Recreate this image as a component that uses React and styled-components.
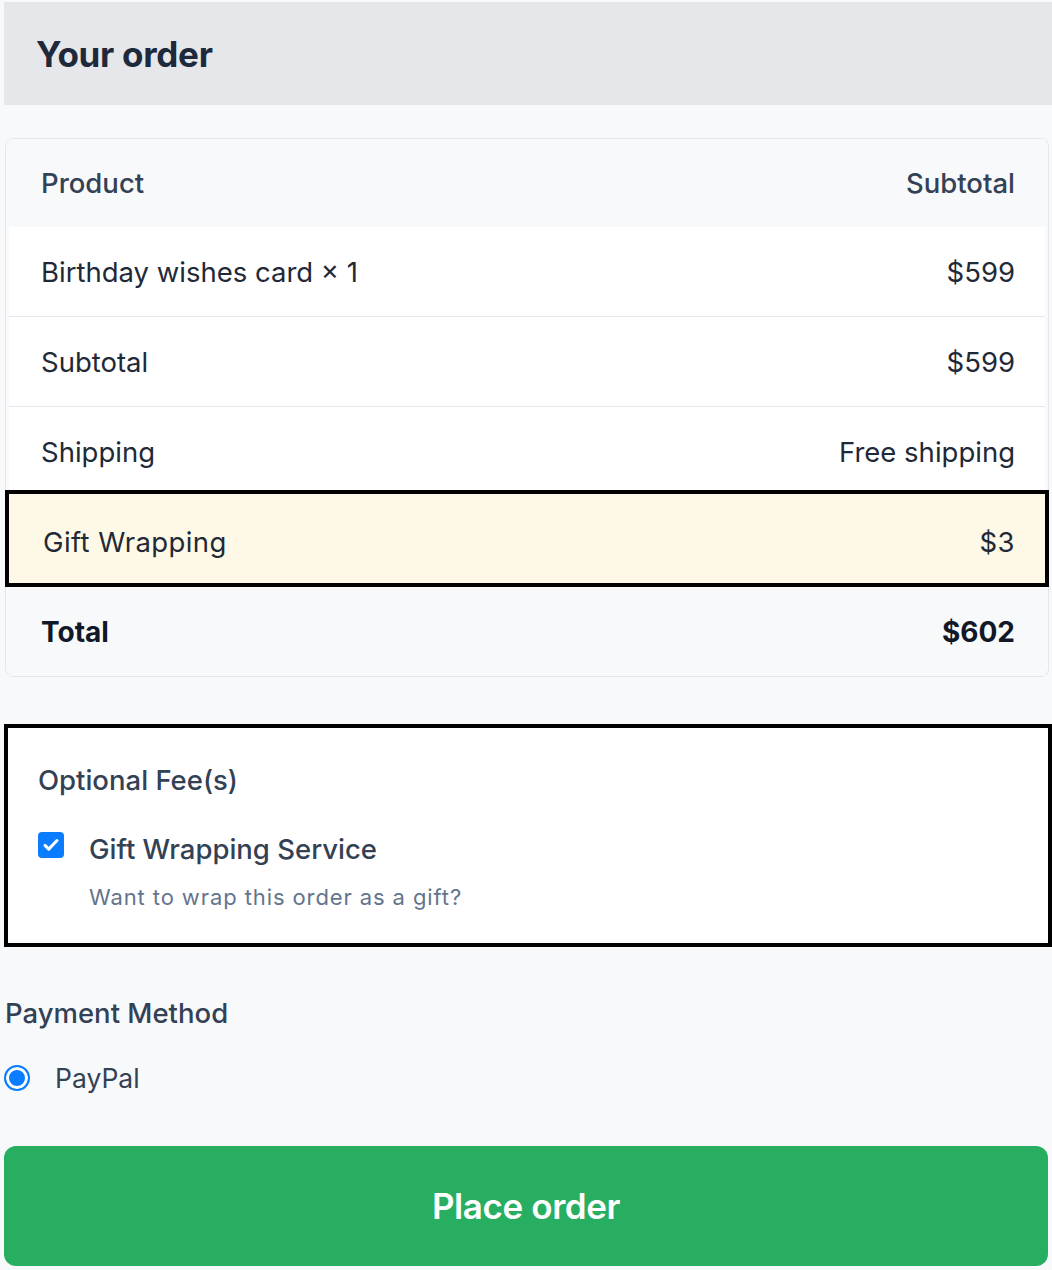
import React from 'react';
import styled, { createGlobalStyle } from 'styled-components';

const GlobalStyle = createGlobalStyle`
  html, body {
    margin: 0;
    padding: 0;
    background: #f8f9fb;
    font-family: Inter, "Noto Sans", "Liberation Sans", sans-serif;
    color: #1f2937;
  }
`;

const Page = styled.div`
  padding: 2px 2px 4px 4px;
  display: flex;
  flex-direction: column;
`;

const Header = styled.div`
  background: #e5e7eb;
  height: 103px;
  margin-right: -2px;
  display: flex;
  align-items: center;
  padding-left: 32px;
  h2 {
    margin: 0;
    font-size: 35px;
    font-weight: 700;
    color: #1e293b;
    letter-spacing: -0.3px;
  }
`;

const Card = styled.div`
  margin: 33px 1px 0 1px;
  border: 1px solid #e5e7eb;
  border-radius: 8px;
  padding: 0 3px;
  background: #f8f9fb;
`;

const Row = styled.div`
  display: flex;
  justify-content: space-between;
  align-items: center;
  box-sizing: border-box;
  height: ${p => p.$h || 90}px;
  padding: ${p => p.$pt || 0}px 30px 0 ${p => p.$pl || 32}px;
  font-size: ${p => (p.$bold ? 28 : 27.5)}px;
  color: ${p => (p.$bold ? '#111827' : '#1f2937')};
  font-weight: ${p => (p.$bold ? 700 : 400)};
  letter-spacing: ${p => (p.$wide ? 0.4 : 0)}px;
  background: ${p => p.$bg || '#ffffff'};
  border-bottom: ${p => (p.$line ? '1px solid #e5e7eb' : 'none')};
  outline: ${p => (p.$hl ? '4px solid #000' : 'none')};
  margin: ${p => (p.$hl ? '4px 0' : '0')};
`;

const HeadRow = styled(Row)`
  color: #334155;
  font-weight: 500;
`;

const FeeBox = styled.div`
  margin: 51px 0 0 4px;
  width: 1040px;
  height: 215px;
  box-sizing: border-box;
  outline: 4px solid #000;
  background: #fff;
  padding: 36px 30px 0;
`;

const FeeTitle = styled.div`
  font-size: 27.5px;
  font-weight: 500;
  color: #334155;
  line-height: 32px;
`;

const FeeOption = styled.label`
  display: grid;
  grid-template-columns: 26px 1fr;
  column-gap: 25px;
  margin-top: 39px;
`;

const Check = styled.span`
  width: 26px;
  height: 26px;
  border-radius: 4px;
  background: #0a7cff;
  display: flex;
  align-items: center;
  justify-content: center;
  margin-top: -3px;
`;

const OptionName = styled.div`
  font-size: 27.5px;
  font-weight: 500;
  color: #334155;
  line-height: 28px;
`;

const OptionDesc = styled.div`
  grid-column: 2;
  font-size: 22px;
  color: #64748b;
  margin-top: 21px;
  letter-spacing: 0.9px;
`;

const Section = styled.div`
  margin-top: 54px;
  padding-left: 1px;
`;

const SectionTitle = styled.div`
  font-size: 27.5px;
  font-weight: 500;
  color: #334155;
  line-height: 32px;
`;

const RadioRow = styled.label`
  display: flex;
  align-items: center;
  gap: 25px;
  margin-top: 33px;
  margin-left: -1px;
  font-size: 26.5px;
  color: #334155;
`;

const Radio = styled.span`
  width: 26px;
  height: 26px;
  box-sizing: border-box;
  border-radius: 50%;
  border: 2px solid #0a7cff;
  background: #0a7cff;
  box-shadow: inset 0 0 0 3px #fff;
`;

const PlaceButton = styled.button`
  margin: 52px 2px 0 0;
  height: 120px;
  border: none;
  border-radius: 12px;
  background: #27ae60;
  color: #fff;
  font-family: inherit;
  font-size: 35px;
  font-weight: 600;
  letter-spacing: -0.4px;
  cursor: pointer;
`;

export default function App() {
  return (
    <>
      <GlobalStyle />
      <Page>
        <Header>
          <h2>Your order</h2>
        </Header>
        <Card>
          <HeadRow $bg="#f8f9fb" $h={88}>
            <span>Product</span>
            <span>Subtotal</span>
          </HeadRow>
          <Row $line>
            <span>Birthday wishes card × 1</span>
            <span>$599</span>
          </Row>
          <Row $line>
            <span>Subtotal</span>
            <span>$599</span>
          </Row>
          <Row $h={83} $pt={6}>
            <span>Shipping</span>
            <span>Free shipping</span>
          </Row>
          <Row $hl $wide $bg="#fdf9e6" $pl={34} $h={89} $pt={6}>
            <span>Gift Wrapping</span>
            <span>$3</span>
          </Row>
          <Row $bold $bg="#f8f9fb" $h={89}>
            <span>Total</span>
            <span>$602</span>
          </Row>
        </Card>
        <FeeBox>
          <FeeTitle>Optional Fee(s)</FeeTitle>
          <FeeOption>
            <Check>
              <svg width="18" height="18" viewBox="0 0 24 24" fill="none" stroke="#fff" strokeWidth="4" strokeLinecap="round" strokeLinejoin="round">
                <path d="M4 12.5l5 5L20 6" />
              </svg>
            </Check>
            <OptionName>Gift Wrapping Service</OptionName>
            <OptionDesc>Want to wrap this order as a gift?</OptionDesc>
          </FeeOption>
        </FeeBox>
        <Section>
          <SectionTitle>Payment Method</SectionTitle>
          <RadioRow>
            <Radio />
            <span>PayPal</span>
          </RadioRow>
        </Section>
        <PlaceButton>Place order</PlaceButton>
      </Page>
    </>
  );
}
